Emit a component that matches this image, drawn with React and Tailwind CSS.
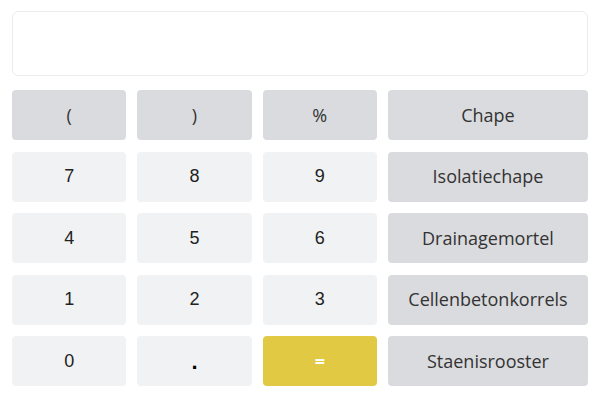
const keys = [
  { label: '(', kind: 'op' },
  { label: ')', kind: 'op' },
  { label: '%', kind: 'op' },
  { label: 'Chape', kind: 'mat' },
  { label: '7', kind: 'num' },
  { label: '8', kind: 'num' },
  { label: '9', kind: 'num' },
  { label: 'Isolatiechape', kind: 'mat' },
  { label: '4', kind: 'num' },
  { label: '5', kind: 'num' },
  { label: '6', kind: 'num' },
  { label: 'Drainagemortel', kind: 'mat' },
  { label: '1', kind: 'num' },
  { label: '2', kind: 'num' },
  { label: '3', kind: 'num' },
  { label: 'Cellenbetonkorrels', kind: 'mat' },
  { label: '0', kind: 'num' },
  { label: '.', kind: 'dot' },
  { label: '=', kind: 'eq' },
  { label: 'Staenisrooster', kind: 'mat' },
];

const styles = {
  op: "bg-[#dadbde] text-[#333] font-['Open_Sans',sans-serif] text-[18px] font-medium",
  mat: "bg-[#dadbde] text-[#333] font-['Open_Sans',sans-serif] text-[18px]",
  num: "bg-[#f1f2f4] text-[#222] font-['Liberation_Sans',Arial,sans-serif] text-[18px]",
  dot: "bg-[#f1f2f4] text-black font-['Liberation_Sans',Arial,sans-serif] text-[22px] font-bold",
  eq: "bg-[#e1c943] text-white font-['Open_Sans',sans-serif] text-[18px] font-bold",
};

export default function App() {
  return (
    <div className="w-[600px] h-[400px] bg-white px-[12px] pt-[11px]">
      <div className="h-[65px] rounded-md border border-[#ececee] bg-white" />
      <div className="grid grid-cols-[1fr_1fr_1fr_1.75fr] gap-x-[11px] gap-y-[11.5px] mt-[14px]">
        {keys.map((k) => (
          <button
            key={k.label}
            className={`h-[50px] rounded-[4px] flex items-center justify-center ${styles[k.kind]}`}
          >
            {k.label}
          </button>
        ))}
      </div>
    </div>
  );
}
